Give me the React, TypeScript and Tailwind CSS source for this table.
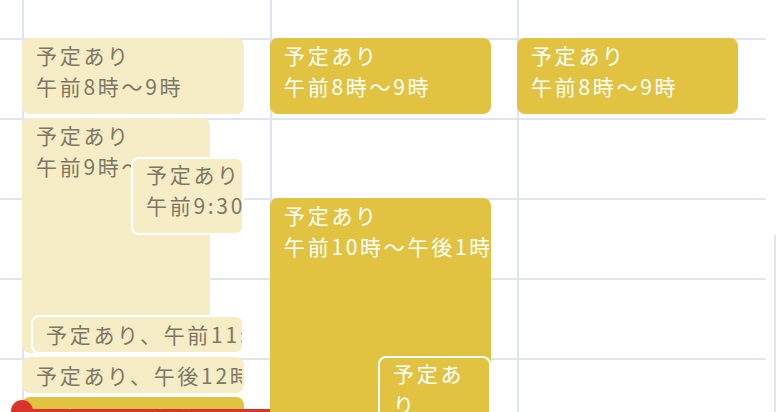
import React from "react";

type Ev = {
  lines: string[];
  pos: string;
  dark?: boolean;
  ring?: boolean;
  single?: boolean;
  wrap?: boolean;
};

const columns: Ev[][] = [
  [
    { lines: ["予定あり", "午前8時〜9時"], pos: "left-[-2px] top-[38px] w-[222px] h-[76px]" },
    { lines: ["予定あり", "午前9時〜午後11時30分"], pos: "left-[-2px] top-[118px] w-[188px] h-[235px]" },
    { lines: ["予定あり", "午前9:30〜10:30"], pos: "left-[107px] top-[157px] w-[113px] h-[78px]", ring: true },
    { lines: ["予定あり、午前11:30〜12時"], pos: "left-[7px] top-[315px] w-[213px] h-[39px]", ring: true, single: true },
    { lines: ["予定あり、午後12時〜12時30分"], pos: "left-[-2px] top-[357px] w-[222px] h-[36px]", single: true },
    { lines: ["予定あり、午後12時〜午後1時"], pos: "left-[-2px] top-[397px] w-[222px] h-[40px]", single: true, dark: true },
  ],
  [
    { lines: ["予定あり", "午前8時〜9時"], pos: "left-[-2px] top-[38px] w-[221px] h-[76px]", dark: true },
    { lines: ["予定あり", "午前10時〜午後1時"], pos: "left-[-2px] top-[198px] w-[221px] h-[260px]", dark: true },
    { lines: ["予定あり"], pos: "left-[106px] top-[356px] w-[113px] h-[100px]", dark: true, ring: true, wrap: true },
  ],
  [{ lines: ["予定あり", "午前8時〜9時"], pos: "left-[-2px] top-[38px] w-[221px] h-[76px]", dark: true }],
];

function EventBlock({ ev }: { ev: Ev }) {
  const tone = ev.dark ? "bg-[#e2c341] text-white" : "bg-[#f6ecc5] text-[#7d7866]";
  const edge = ev.ring ? "border-white pl-[13px]" : "border-transparent pl-[12px]";
  return (
    <div
      className={`absolute ${ev.pos} ${tone} ${edge} border-2 rounded-lg overflow-hidden pr-[2px] ${
        ev.single ? "flex items-center" : ""
      }`}
    >
      {ev.lines.map((l) => (
        <div key={l} className={ev.wrap ? "break-all pr-[10px]" : "whitespace-nowrap"}>
          {l}
        </div>
      ))}
    </div>
  );
}

export default function App() {
  return (
    <div className="relative w-[776px] h-[412px] overflow-hidden bg-white font-['Noto_Sans_CJK_JP',sans-serif] text-[21px] leading-[31px] tracking-[2.7px]">
      {/* hour rows */}
      <div className="absolute inset-y-0 left-0 w-[766px] flex flex-col">
        <div className="h-[38px] shrink-0" />
        {[0, 1, 2, 3, 4].map((i) => (
          <div key={i} className="h-[80px] shrink-0 border-t-2 border-[#e0e4ef]" />
        ))}
      </div>

      {/* day columns */}
      <div className="absolute inset-y-0 left-0 w-[766px] flex pl-[22px]">
        {columns.map((evs, ci) => (
          <div
            key={ci}
            className={`relative h-full border-l-2 border-[#e0e4ef] ${ci === 0 ? "w-[248px]" : ci === 1 ? "w-[247px]" : "flex-1"}`}
          >
            {evs.map((ev, i) => (
              <EventBlock key={i} ev={ev} />
            ))}
            {ci === 0 && (
              <>
                <div className="absolute left-[-2px] top-[409px] h-[4px] w-[250px] bg-[#d9342b]" />
                <div className="absolute left-[-13px] top-[400px] h-[22px] w-[22px] rounded-full bg-[#d9342b]" />
              </>
            )}
          </div>
        ))}
      </div>

      {/* scrollbar */}
      <div className="absolute right-0 top-[235px] h-[177px] w-[2px] bg-[#e4e4e4]" />
    </div>
  );
}
